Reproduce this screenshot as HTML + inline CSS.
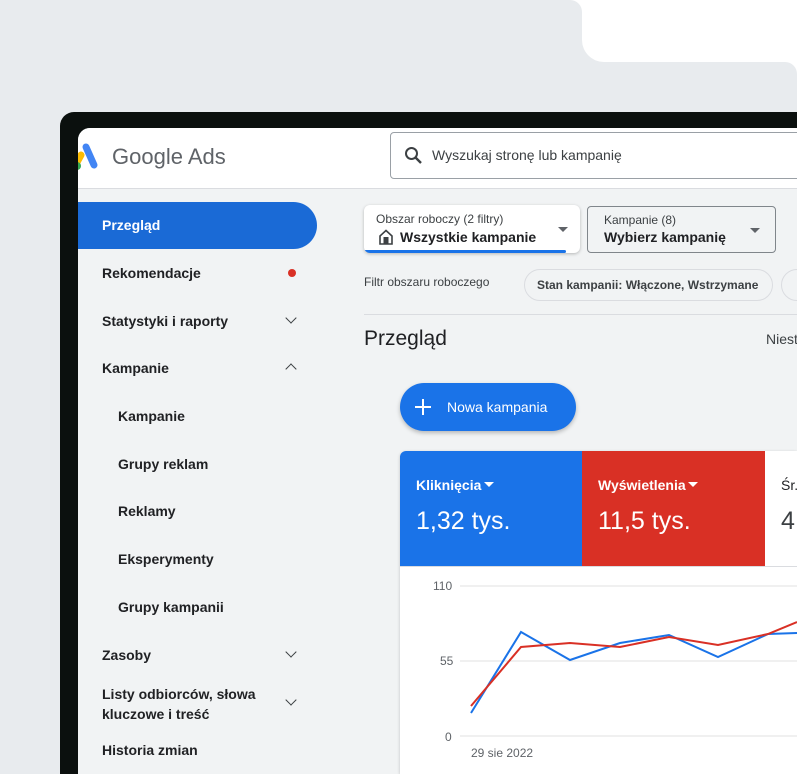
<!DOCTYPE html>
<html style="width:797px;height:774px;overflow:hidden"><head><meta charset="utf-8"><style>
*{margin:0;padding:0;box-sizing:border-box}
body{width:797px;height:774px;overflow:hidden;background:#fff;font-family:"Liberation Sans",Arial,sans-serif;position:relative}
.a{position:absolute}
.txt{color:#202124;font-size:14px;font-weight:bold}
.chev{position:absolute;left:287px;width:8px;height:8px;border-right:1.6px solid #3c4043;border-bottom:1.6px solid #3c4043}
</style></head><body>
<div class="a" style="left:0;top:0;width:797px;height:774px;background:#e8ebee"></div>
<div class="a" style="left:582px;top:0;width:215px;height:62px;background:#fff;border-bottom-left-radius:22px"></div>
<div class="a" style="left:560px;top:0;width:22px;height:20px;background:#fff"></div>
<div class="a" style="left:560px;top:0;width:22px;height:20px;background:#e8ebee;border-top-right-radius:12px"></div>
<div class="a" style="left:785px;top:62px;width:12px;height:12px;background:#fff"></div>
<div class="a" style="left:773px;top:62px;width:24px;height:24px;background:#e8ebee;border-top-right-radius:12px"></div>
<!-- bezel -->
<div class="a" style="left:60px;top:112px;width:737px;height:662px;background:#0b100e;border-top-left-radius:14px"></div>
<div class="a" style="left:78px;top:128px;width:719px;height:646px;background:#f1f3f4;border-top-left-radius:12px;overflow:hidden">
 <div class="a" style="left:0;top:0;width:719px;height:61px;background:#fff;border-bottom:1px solid #dadce0"></div>
</div>
<!-- logo -->
<svg class="a" style="left:78px;top:140px" width="24" height="32" viewBox="0 0 24 32">
<path d="M-2 24 L3 15" stroke="#fbbc04" stroke-width="7" stroke-linecap="round"/>
<circle cx="-1" cy="26" r="4" fill="#34a853"/>
<path d="M8 7 L16 25" stroke="#4285f4" stroke-width="7" stroke-linecap="round"/>
</svg>
<div class="a" style="left:112px;top:144px;font-size:22px;color:#5f6368">Google Ads</div>
<div class="a" style="left:390px;top:132px;width:420px;height:47px;border:1px solid #9aa0a6;border-radius:4px;background:#fff"></div>
<svg class="a" style="left:404px;top:146px" width="20" height="20" viewBox="0 0 20 20"><circle cx="7.5" cy="7.5" r="5.5" fill="none" stroke="#3c4043" stroke-width="2"/><path d="M11.5 11.5 L17 17" stroke="#3c4043" stroke-width="2.4"/></svg>
<div class="a" style="left:432px;top:147px;font-size:14px;color:#3c4043">Wyszukaj stronę lub kampanię</div>
<!-- sidebar -->
<div class="a" style="left:78px;top:202px;width:239px;height:47px;background:#1a6ad6;border-radius:0 24px 24px 0"></div>
<div class="a txt" style="left:102px;top:217px;color:#fff">Przegląd</div>
<div class="a txt" style="left:102px;top:265px">Rekomendacje</div>
<div class="a" style="left:288px;top:269px;width:8px;height:8px;border-radius:50%;background:#d93025"></div>
<div class="a txt" style="left:102px;top:313px">Statystyki i raporty</div>
<div class="chev" style="top:314px;transform:rotate(45deg)"></div>
<div class="a txt" style="left:102px;top:360px">Kampanie</div>
<div class="chev" style="top:365px;transform:rotate(-135deg)"></div>
<div class="a txt" style="left:118px;top:408px">Kampanie</div>
<div class="a txt" style="left:118px;top:456px">Grupy reklam</div>
<div class="a txt" style="left:118px;top:503px">Reklamy</div>
<div class="a txt" style="left:118px;top:551px">Eksperymenty</div>
<div class="a txt" style="left:118px;top:599px">Grupy kampanii</div>
<div class="a txt" style="left:102px;top:647px">Zasoby</div>
<div class="chev" style="top:648px;transform:rotate(45deg)"></div>
<div class="a txt" style="left:102px;top:684px;line-height:20px">Listy odbiorców, słowa<br>kluczowe i treść</div>
<div class="chev" style="top:696px;transform:rotate(45deg)"></div>
<div class="a txt" style="left:102px;top:742px">Historia zmian</div>
<!-- main top -->
<div class="a" style="left:364px;top:205px;width:216px;height:48px;background:#fff;border-radius:6px;box-shadow:0 1px 3px rgba(0,0,0,.25);overflow:hidden">
 <div class="a" style="left:0;bottom:0;width:202px;height:3px;background:#1a73e8;border-radius:2px"></div>
</div>
<div class="a" style="left:376px;top:212px;font-size:12px;color:#3c4043">Obszar roboczy (2 filtry)</div>
<svg class="a" style="left:379px;top:229px" width="14" height="16" viewBox="0 0 14 16"><path d="M1 15 V7 L7 1.5 L13 7 V15 Z" fill="none" stroke="#3c4043" stroke-width="1.6"/><rect x="4.5" y="8" width="5" height="7" fill="#3c4043"/></svg>
<div class="a txt" style="left:400px;top:229px;font-size:14px">Wszystkie kampanie</div>
<div class="a" style="left:558px;top:227px;border:5px solid transparent;border-top:5px solid #5f6368"></div>
<div class="a" style="left:587px;top:206px;width:189px;height:47px;border:1px solid #80868b;border-radius:4px"></div>
<div class="a" style="left:604px;top:213px;font-size:12px;color:#3c4043">Kampanie (8)</div>
<div class="a txt" style="left:604px;top:229px;font-size:14px">Wybierz kampanię</div>
<div class="a" style="left:750px;top:228px;border:5px solid transparent;border-top:5px solid #5f6368"></div>
<div class="a" style="left:364px;top:275px;font-size:12px;color:#3c4043">Filtr obszaru roboczego</div>
<div class="a" style="left:524px;top:269px;width:249px;height:32px;border:1px solid #dadce0;border-radius:16px"></div>
<div class="a" style="left:537px;top:278px;font-size:12px;font-weight:bold;color:#3c4043">Stan kampanii: Włączone, Wstrzymane</div>
<div class="a" style="left:781px;top:269px;width:40px;height:32px;border:1px solid #dadce0;border-radius:16px"></div>
<div class="a" style="left:364px;top:314px;width:433px;height:1px;background:#dadce0"></div>
<div class="a" style="left:364px;top:327px;font-size:21px;color:#202124">Przegląd</div>
<div class="a" style="left:766px;top:331px;font-size:14px;color:#3c4043">Niest</div>
<!-- button -->
<div class="a" style="left:400px;top:383px;width:176px;height:48px;background:#1a73e8;border-radius:24px;box-shadow:0 2px 4px rgba(0,0,0,.25)"></div>
<div class="a" style="left:415px;top:406px;width:16px;height:2px;background:#fff"></div>
<div class="a" style="left:422px;top:399px;width:2px;height:16px;background:#fff"></div>
<div class="a" style="left:447px;top:399px;font-size:14px;color:#fff">Nowa kampania</div>
<!-- card -->
<div class="a" style="left:400px;top:451px;width:397px;height:323px;background:#fff;border-radius:6px 0 0 0;box-shadow:0 1px 3px rgba(0,0,0,.2);overflow:hidden">
 <div class="a" style="left:0;top:0;width:182px;height:115px;background:#1a73e8"></div>
 <div class="a" style="left:182px;top:0;width:183px;height:115px;background:#d93025"></div>
 <div class="a" style="left:0;top:115px;width:397px;height:1px;background:#dadce0"></div>
</div>
<div class="a" style="left:416px;top:477px;font-size:14px;font-weight:bold;color:#fff">Kliknięcia</div>
<div class="a" style="left:484px;top:482px;border:5px solid transparent;border-top:5px solid #fff"></div>
<div class="a" style="left:416px;top:507px;font-size:25px;color:#fff">1,32 tys.</div>
<div class="a" style="left:598px;top:477px;font-size:14px;font-weight:bold;color:#fff">Wyświetlenia</div>
<div class="a" style="left:688px;top:482px;border:5px solid transparent;border-top:5px solid #fff"></div>
<div class="a" style="left:598px;top:507px;font-size:25px;color:#fff">11,5 tys.</div>
<div class="a" style="left:781px;top:477px;font-size:14px;color:#202124">Śr.</div>
<div class="a" style="left:781px;top:507px;font-size:25px;color:#3c4043">4</div>
<svg class="a" style="left:400px;top:570px" width="397" height="204">
<g font-family="Liberation Sans" font-size="12" fill="#5f6368">
<text x="33" y="20">110</text><text x="40" y="95">55</text><text x="45" y="171">0</text><text x="71" y="187">29 sie 2022</text></g>
<g stroke="#e0e0e0" stroke-width="1"><line x1="60" y1="16" x2="397" y2="16"/><line x1="60" y1="91" x2="397" y2="91"/><line x1="60" y1="166" x2="397" y2="166"/></g>
<polyline fill="none" stroke="#1a73e8" stroke-width="2" points="71,143 121,62 170,90 220,73 269,65 318,87 368,64 397,63"/>
<polyline fill="none" stroke="#d93025" stroke-width="2" points="71,136 121,77 170,73 220,77 269,67 318,75 368,64 397,52"/>
</svg>
</body></html>
